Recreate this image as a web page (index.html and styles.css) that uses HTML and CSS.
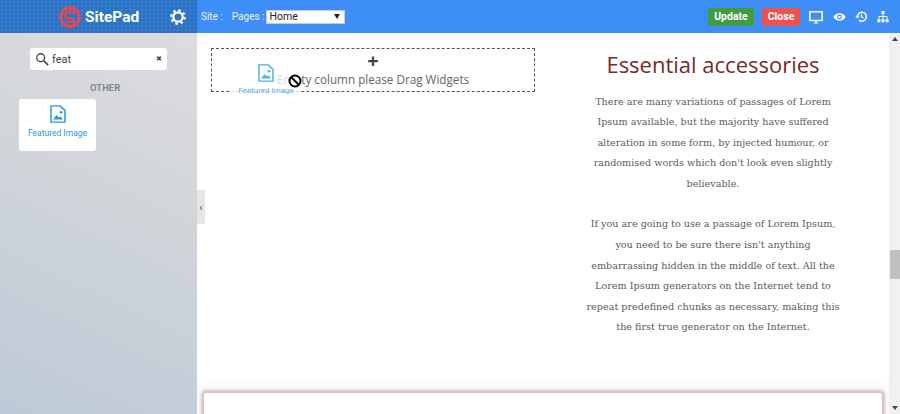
FILE: index.html
```html
<!DOCTYPE html>
<html>
<head>
	<title>SitePad</title>
	<link rel="stylesheet" href="styles.css">
</head>
<body>
	<div class="topbar">
		<div class="brand">
			<svg class="logo" viewBox="0 0 24 24" width="22" height="22">
				<circle cx="12" cy="12" r="10.200" fill="none" stroke="#e8474c" stroke-width="3.400"/>
				<path d="M17.500 9C16 5.500 9 5 7 8.500S9 13 12 13.500s4.500 2 3 3.500-5 1-6.500-1" fill="none" stroke="#e8474c" stroke-width="2.400"/>
			</svg>
			<span class="brand-name">SitePad</span>
			<svg class="gear" viewBox="0 0 24 24" width="16" height="16">
				<circle cx="12" cy="12" r="7" fill="none" stroke="#fff" stroke-width="3.400"/>
				<circle cx="12" cy="12" r="10" fill="none" stroke="#fff" stroke-width="3.600" stroke-dasharray="3.900 3.950"/>
			</svg>
		</div>
		<div class="tools">
			<span class="tool-label">Site :</span>
			<span class="tool-label">Pages :</span>
			<div class="page-select"><span>Home</span><i class="select-arrow"></i></div>
			<div class="actions">
				<button type="button" class="btn btn-update">Update</button>
				<button type="button" class="btn btn-close">Close</button>
				<svg class="icon icon-screen" viewBox="0 0 16 16" width="14" height="14">
					<path d="M1 2h14v10H1z" fill="none" stroke="#fff" stroke-width="1.800"/>
					<path d="M5 14.500h6v1H5zM7 12h2v3H7z" fill="#fff"/>
				</svg>
				<svg class="icon" viewBox="0 0 16 12" width="13" height="10">
					<path d="M0.500 6C3 0 13 0 15.500 6 13 12 3 12 0.500 6z" fill="#fff"/>
					<circle cx="8" cy="6" r="3" fill="#3e8ef7"/>
					<circle cx="8" cy="6" r="1.600" fill="#fff"/>
				</svg>
				<svg class="icon" viewBox="0 0 16 16" width="13" height="13">
					<path d="M3 8a5.500 5.500 0 1 1 2 4.500" fill="none" stroke="#fff" stroke-width="1.800"/>
					<path d="M0 7h6l-3 3.500z" fill="#fff"/>
					<path d="M8 4.500v4l2.500 1.500" fill="none" stroke="#fff" stroke-width="1.400"/>
				</svg>
				<svg class="icon" viewBox="0 0 16 16" width="12" height="13">
					<path d="M6 0.500h4v4H6zM0.500 11.500h4v4h-4zM6 11.500h4v4H6zM11.500 11.500h4v4h-4z" fill="#fff"/>
					<path d="M8 4v8M2.500 12V8h11v4" fill="none" stroke="#fff" stroke-width="1.200"/>
				</svg>
			</div>
		</div>
	</div>

	<div class="workspace">
		<div class="sidebar">
			<div class="search">
				<svg viewBox="0 0 16 16" width="14" height="14">
					<circle cx="6.500" cy="6.500" r="4.500" fill="none" stroke="#444" stroke-width="1.500"/>
					<path d="M10 10l5 5" stroke="#444" stroke-width="2"/>
				</svg>
				<span class="search-text">feat</span>
				<span class="search-clear">&#10006;</span>
			</div>
			<div class="group-title">OTHER</div>
			<div class="widget">
				<svg viewBox="0 0 16 20" width="16" height="18" preserveAspectRatio="none">
					<path d="M1 1h9l5 5v13H1z" fill="#fff" stroke="#2a9bd8" stroke-width="1.500"/>
					<path d="M3 16l3.500-5 2.500 3 1.500-1.500L13 16z" fill="#2a9bd8"/>
					<circle cx="11" cy="8" r="1.400" fill="#2a9bd8"/>
				</svg>
				<span>Featured Image</span>
			</div>
			<div class="collapse">&#8249;</div>
		</div>

		<div class="main">
			<div class="columns">
				<div class="col-left">
					<div class="dropzone">
						<div class="plus">+</div>
						<div class="empty-text">Empty column please Drag Widgets</div>
					</div>
					<div class="drag-ghost">
						<svg viewBox="0 0 16 20" width="16" height="18" preserveAspectRatio="none">
							<path d="M1 1h9l5 5v13H1z" fill="#fff" stroke="#2a9bd8" stroke-width="1.500"/>
							<path d="M3 16l3.500-5 2.500 3 1.500-1.500L13 16z" fill="#2a9bd8"/>
							<circle cx="11" cy="8" r="1.400" fill="#2a9bd8"/>
						</svg>
						<span>Featured Image</span>
					</div>
					<svg class="no-drop" viewBox="0 0 14 14" width="14" height="14">
						<circle cx="7" cy="7" r="5.500" fill="#fff" stroke="#000" stroke-width="2"/>
						<path d="M3 3l8 8" stroke="#000" stroke-width="2"/>
					</svg>
				</div>
				<div class="col-right">
					<h2>Essential accessories</h2>
					<p>There are many variations of passages of Lorem Ipsum available, but the majority have suffered alteration in some form, by injected humour, or randomised words which don't look even slightly believable.</p>
					<p>If you are going to use a passage of Lorem Ipsum, you need to be sure there isn't anything embarrassing hidden in the middle of text. All the Lorem Ipsum generators on the Internet tend to repeat predefined chunks as necessary, making this the first true generator on the Internet.</p>
				</div>
			</div>
			<div class="card"></div>
		</div>

		<div class="scrollbar">
			<i class="arrow-up"></i>
			<div class="thumb"></div>
			<i class="arrow-down"></i>
		</div>
	</div>
</body>
</html>
```

FILE: styles.css
```css
html, body {
	margin: 0;
	height: 414px;
	overflow: hidden;
}
body {
	font-family: Roboto, "Liberation Sans", sans-serif;
	background-color: #fff;
}
.topbar {
	display: flex;
	height: 33px;
	background-color: #3e8ef7;
	color: #fff;
}
.brand {
	width: 197px;
	box-sizing: border-box;
	padding: 0 11px 0 59px;
	display: flex;
	align-items: center;
	background-color: #2a73c6;
	background-image: radial-gradient(rgba(255, 255, 255, 0.08) 1px, transparent 1px);
	background-size: 4px 4px;
}
.brand-name {
	font-size: 15.500px;
	font-weight: bold;
	margin-left: 4px;
	flex: 1;
}
.tools {
	flex: 1;
	display: flex;
	align-items: center;
	padding: 0 11px 0 4px;
	font-size: 10px;
}
.tool-label {
	margin-right: 9px;
	opacity: 0.9;
}
.tool-label + .tool-label {
	margin-right: 1px;
}
.page-select {
	width: 79px;
	height: 14px;
	box-sizing: border-box;
	padding: 0 4px 0 3px;
	display: flex;
	align-items: center;
	justify-content: space-between;
	background-color: #fff;
	border: 1px solid #ccc;
	color: #222;
	font-size: 10.500px;
}
.select-arrow {
	border-top: 5px solid #222;
	border-left: 3px solid transparent;
	border-right: 3px solid transparent;
}
.actions {
	margin-left: auto;
	display: flex;
	align-items: center;
}
.btn {
	height: 18px;
	border: 0;
	border-radius: 2px;
	padding: 0;
	color: #fff;
	font-family: Roboto, sans-serif;
	font-size: 10.500px;
	font-weight: bold;
}
.btn-update {
	width: 46px;
	background-color: #3f9c42;
}
.btn-close {
	width: 38px;
	margin: 0 9px 0 8px;
	background-color: #f0504f;
}
.icon {
	margin-right: 9px;
}
.icon-screen {
	margin-right: 10px;
}
.icon:last-child {
	margin-right: 0;
}
.workspace {
	display: flex;
	height: 381px;
}
.sidebar {
	position: relative;
	width: 197px;
	flex: none;
	box-sizing: border-box;
	padding: 15px 19px 0;
	background: linear-gradient(205deg, #dcdcdf 0%, #d3d6da 35%, #bdcad7 100%);
}
.search {
	width: 137px;
	height: 22px;
	box-sizing: border-box;
	margin-left: 11px;
	padding: 0 5px;
	display: flex;
	align-items: center;
	background-color: #fff;
	border-radius: 3px;
	font-size: 11px;
	color: #444;
}
.search-text {
	flex: 1;
	margin-left: 3px;
}
.search-clear {
	font-size: 7px;
}
.group-title {
	margin-top: 12px;
	padding-left: 71px;
	font-size: 9.500px;
	font-weight: bold;
	color: #85888d;
}
.widget {
	width: 77px;
	height: 52px;
	margin-top: 6px;
	box-sizing: border-box;
	padding-top: 6px;
	display: flex;
	flex-direction: column;
	align-items: center;
	background-color: #fff;
	border-radius: 3px;
	font-size: 8.500px;
	color: #2a9bd8;
}
.widget span {
	margin-top: 5px;
}
.collapse {
	position: absolute;
	left: 197px;
	top: 157px;
	z-index: 5;
	width: 8px;
	height: 34px;
	display: flex;
	align-items: center;
	justify-content: center;
	background-color: #e6e6e6;
	font-size: 10px;
	color: #444;
}
.main {
	flex: 1;
	position: relative;
	overflow: hidden;
}
.columns {
	display: flex;
}
.col-left {
	position: relative;
	width: 324px;
	margin: 15px 0 0 14px;
}
.dropzone {
	height: 44px;
	box-sizing: border-box;
	padding-top: 1px;
	border: 1px dashed #555;
	text-align: center;
	font-family: "Open Sans", sans-serif;
	color: #666;
}
.plus {
	font-size: 20px;
	font-weight: bold;
	line-height: 22px;
	color: #444;
}
.empty-text {
	font-size: 11.700px;
	line-height: 15px;
}
.drag-ghost {
	position: absolute;
	left: 20px;
	top: 9px;
	width: 70px;
	height: 42px;
	box-sizing: border-box;
	padding-top: 7px;
	display: flex;
	flex-direction: column;
	align-items: center;
	background-color: rgba(255, 255, 255, 0.75);
	font-size: 8px;
	white-space: nowrap;
	color: #55b3e4;
}
.drag-ghost svg {
	opacity: 0.8;
}
.drag-ghost span {
	margin-top: 4px;
}
.no-drop {
	position: absolute;
	left: 77px;
	top: 26px;
}
.col-right {
	width: 270px;
	margin: 13px 0 0 43px;
	text-align: center;
}
.col-right h2 {
	margin: 0 0 9.500px;
	font-family: "Open Sans", sans-serif;
	font-size: 22px;
	font-weight: normal;
	line-height: 36px;
	color: #762a2a;
}
.col-right p {
	margin: 0 7px 20px;
	font-family: "DejaVu Serif", serif;
	font-size: 9.650px;
	line-height: 20.600px;
	color: #5a5a5a;
}
.card {
	position: absolute;
	left: 7px;
	right: 7px;
	top: 360px;
	height: 60px;
	background-color: #fff;
	border-radius: 2px;
	box-shadow: 0 0 2px 3px rgba(170, 80, 80, 0.3), 0 -1px 10px 6px rgba(0, 0, 0, 0.05);
}
.scrollbar {
	position: relative;
	width: 11px;
	flex: none;
	background-color: #f1f1f1;
}
.thumb {
	position: absolute;
	left: 1px;
	right: 0;
	top: 217px;
	height: 29px;
	background-color: #c1c1c1;
}
.arrow-up, .arrow-down {
	position: absolute;
	left: 3px;
	border-left: 3px solid transparent;
	border-right: 3px solid transparent;
}
.arrow-up {
	top: 4px;
	border-bottom: 4px solid #444;
}
.arrow-down {
	bottom: 4px;
	border-top: 4px solid #444;
}
```
